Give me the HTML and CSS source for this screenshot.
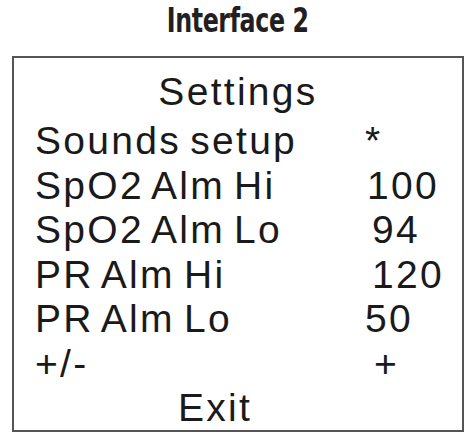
FILE: index.html
```html
<!DOCTYPE html>
<html lang="en">
<head>
    <meta charset="UTF-8">
    <meta name="viewport" content="width=device-width, initial-scale=1.0">
    <title>Interface 2</title>
    <link rel="stylesheet" href="styles.css">
</head>
<body>
    <h1 class="caption"><span class="caption-text">Interface 2</span></h1>
    <div class="screen">
        <div class="heading">Settings</div>
        <div class="menu">
            <span class="label">Sounds setup</span><span class="value v-star">*</span>
            <span class="label">SpO2 Alm Hi</span><span class="value v-100">100</span>
            <span class="label">SpO2 Alm Lo</span><span class="value v-94">94</span>
            <span class="label">PR Alm Hi</span><span class="value v-120">120</span>
            <span class="label">PR Alm Lo</span><span class="value v-50">50</span>
            <span class="label">+/-</span><span class="value v-plus">+</span>
        </div>
        <div class="exit">Exit</div>
    </div>
</body>
</html>
```

FILE: styles.css
```css
body {
    margin: 0;
    padding: 0;
    background-color: #fff;
    color: #1a1a1a;
    font-family: "Liberation Sans", Arial, sans-serif;
}

.caption {
    margin: 0;
    padding-top: 1px;
    height: 40px;
    text-align: center;
    font-family: "DejaVu Sans", sans-serif;
    font-stretch: condensed;
    font-weight: bold;
    font-size: 33px;
    line-height: 40px;
    letter-spacing: -0.5px;
    color: #231f20;
}

.caption-text {
    display: inline-block;
    transform: scaleX(0.8);
}

.screen {
    box-sizing: border-box;
    width: 452px;
    height: 376px;
    margin: 15px 0 0 12px;
    border: 2px solid #555;
    padding: 11px 0 0 21px;
    font-size: 39px;
    letter-spacing: 2.3px;
    word-spacing: -4px;
}

.heading {
    text-align: center;
    margin-left: -21px;
    line-height: 45px;
    margin-bottom: 5px;
}

.menu {
    display: grid;
    grid-template-columns: 330px auto;
    line-height: 44.5px;
}

.v-100 { margin-left: 2px; }
.v-94 { margin-left: 7px; }
.v-120 { margin-left: 7px; }
.v-plus { margin-left: 9px; }

.exit {
    line-height: 44.5px;
    margin-left: 143px;
}
```
